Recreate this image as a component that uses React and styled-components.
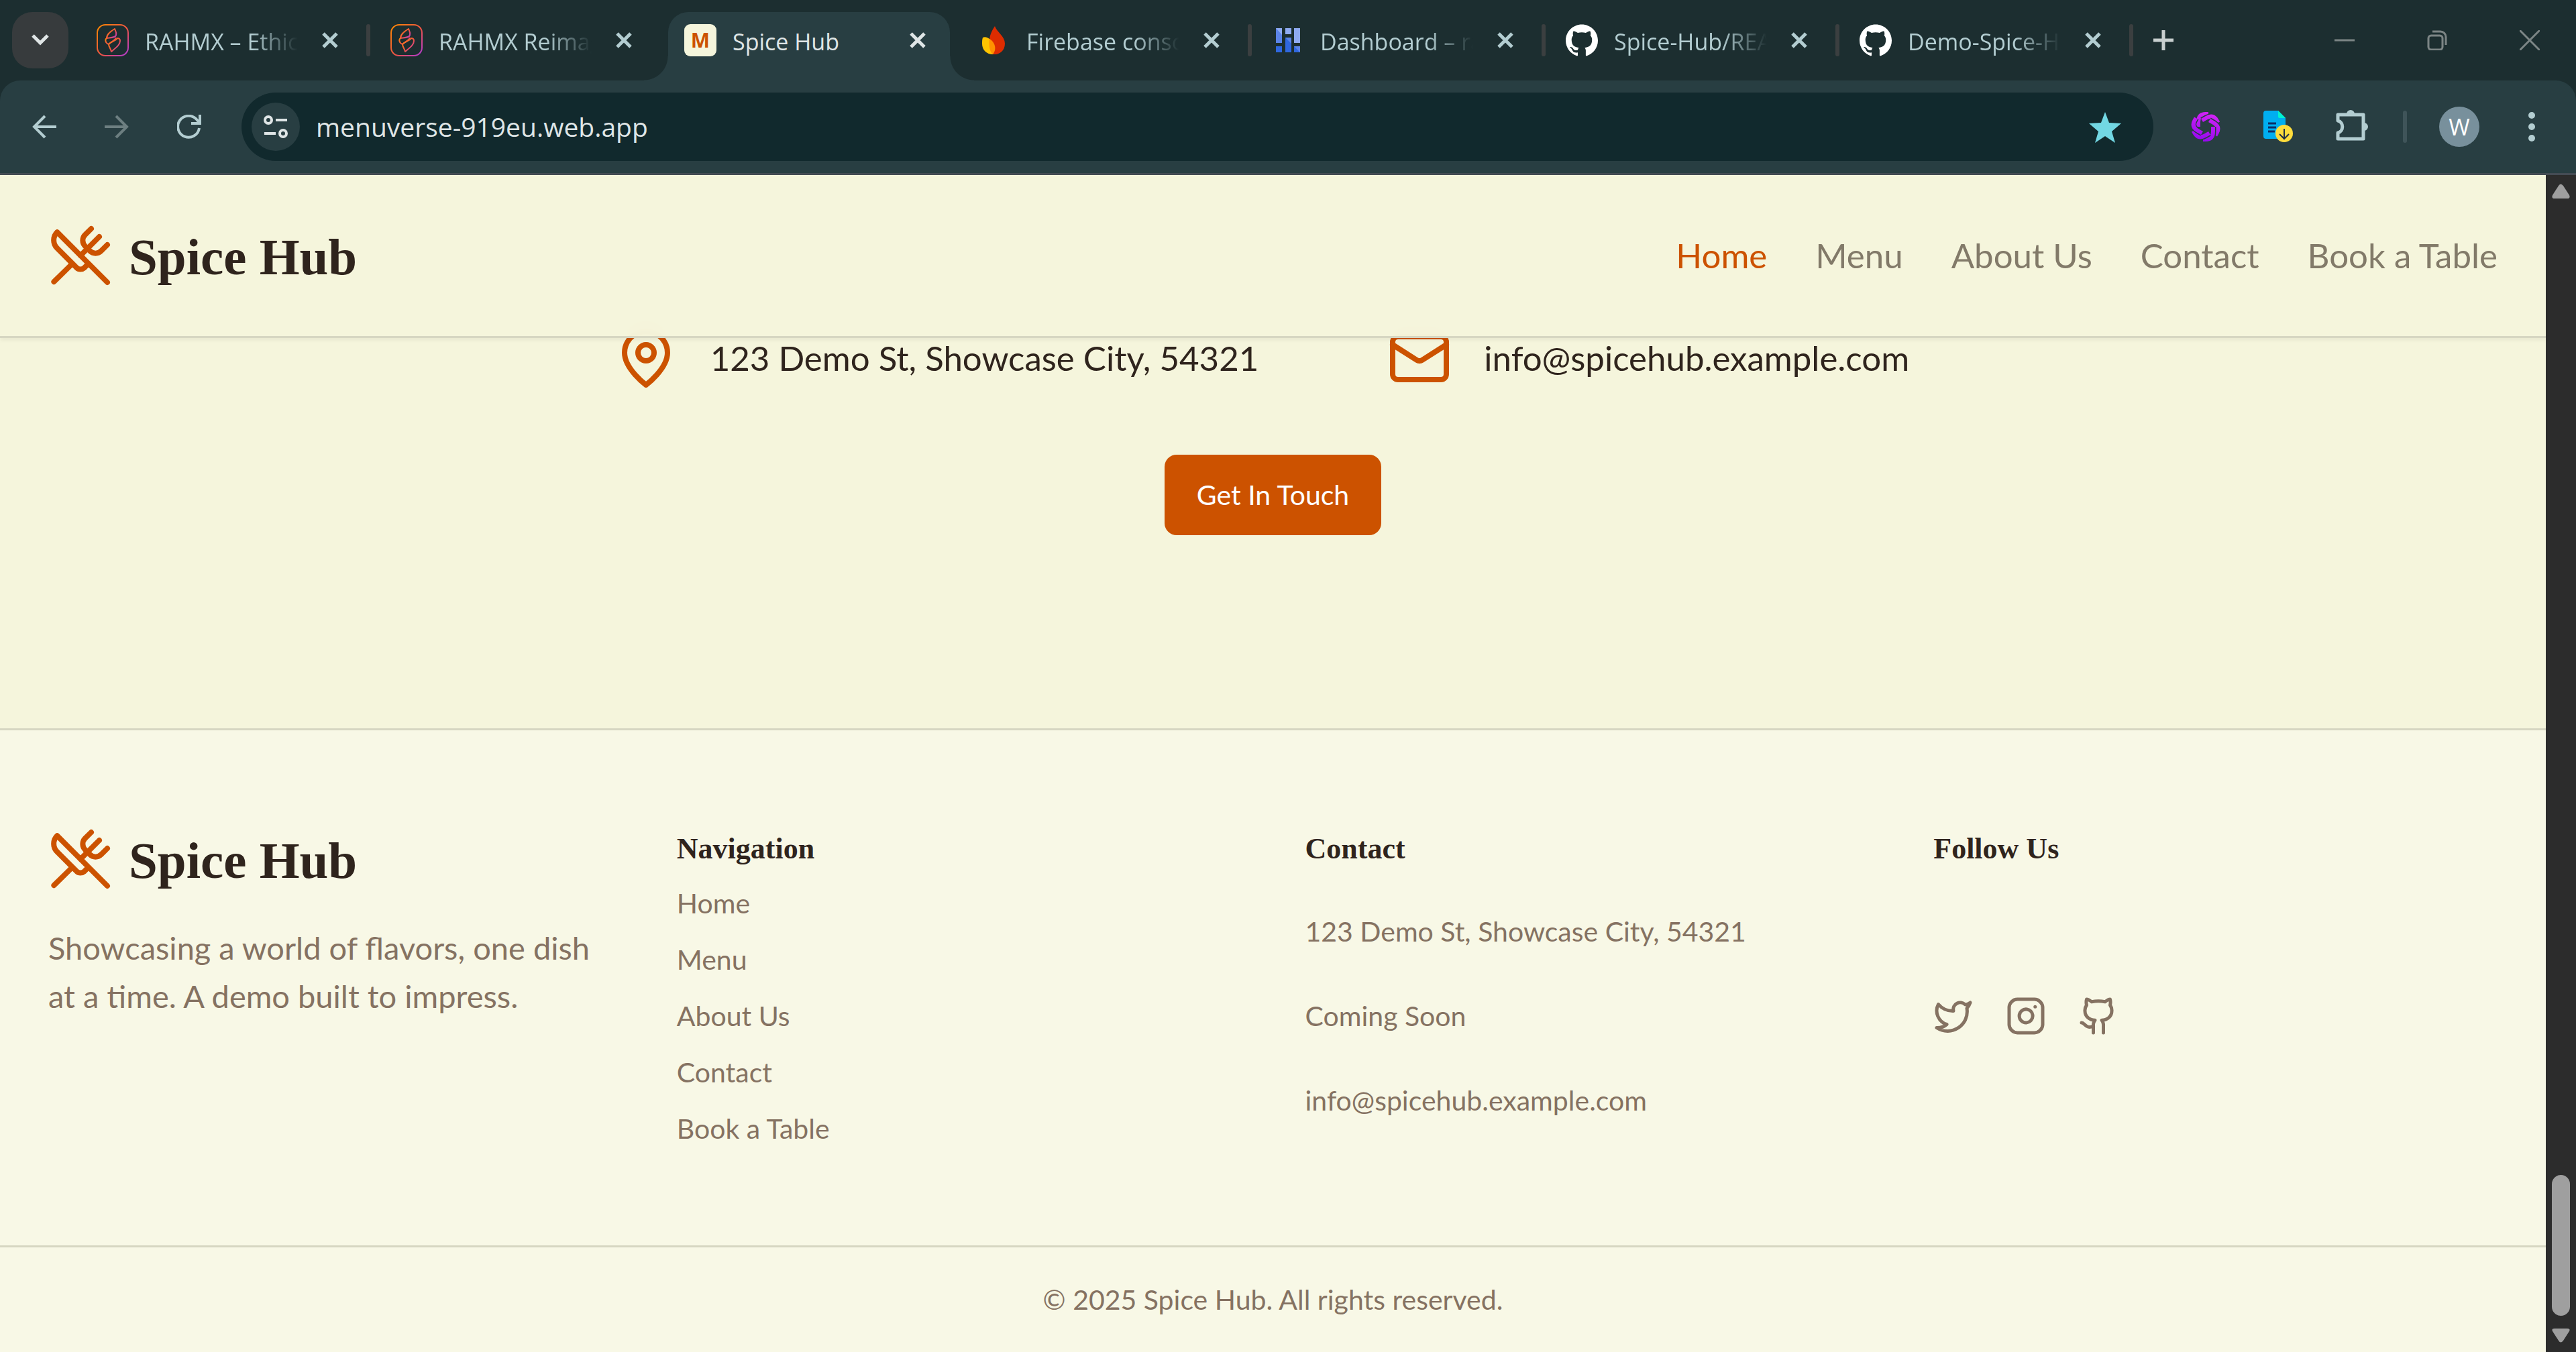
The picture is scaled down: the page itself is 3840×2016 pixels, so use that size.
import React from "react";
import styled, { createGlobalStyle } from "styled-components";
import { UtensilsCrossed, Twitter, Instagram, Github } from "lucide-react";
import { SiGithub } from "react-icons/si";

const body = `Lato, "Open Sans", sans-serif`;
const display = `"Liberation Serif", "Times New Roman", serif`;
const chrome = `"Open Sans", "Noto Sans", sans-serif`;

const color = {
  strip: "#1c2e30",
  toolbar: "#283e42",
  field: "#11292d",
  chromeText: "#b3cdd1",
  chromeBright: "#dfe5e6",
  divider: "#3b3f40",
  cream: "#f5f5dc",
  footer: "#f8f8e6",
  line: "#d6d6c2",
  orange: "#cc5200",
  ink: "#2f241d",
  muted: "#857262",
  navMuted: "#827a69",
};

const GlobalStyle = createGlobalStyle`
  * { box-sizing: border-box; }
  body { margin: 0; background: ${color.cream}; }
  button { border: 0; padding: 0; background: none; font: inherit; color: inherit; cursor: pointer; }
  a { color: inherit; text-decoration: none; }
  h4, p, ul { margin: 0; padding: 0; }
  ul { list-style: none; }
  svg { display: block; flex: none; }
`;

const Window = styled.div`
  display: flex;
  flex-direction: column;
  min-height: 100vh;
  background: ${color.strip};
`;

/* ---------- tab strip ---------- */

const TabStrip = styled.div`
  display: flex;
  align-items: flex-start;
  height: 120px;
  padding-left: 18px;
  font-family: ${chrome};
  color: ${color.chromeText};
`;

const TabSearch = styled.button`
  display: grid;
  place-items: center;
  width: 84px;
  height: 84px;
  margin: 18px 18px 0 0;
  border-radius: 30px;
  background: #373b3d;
  color: ${color.chromeBright};
`;

const TabList = styled.div`
  display: flex;
`;

const TabSlot = styled.div`
  display: flex;
  width: 438px;
  height: 120px;
  padding-top: 18px;
`;

const Tab = styled.div`
  position: relative;
  display: flex;
  align-items: center;
  gap: 24px;
  width: 420px;
  height: 102px;
  padding: 0 24px 18px;
  border-radius: 30px 30px 0 0;
  background: ${(p) => (p.$active ? color.toolbar : "transparent")};
  color: ${(p) => (p.$active ? color.chromeBright : color.chromeText)};

  &::before,
  &::after {
    content: "";
    display: ${(p) => (p.$active ? "block" : "none")};
    position: absolute;
    bottom: 0;
    width: 36px;
    height: 36px;
  }
  &::before {
    right: 100%;
    background: radial-gradient(circle at 0 0, transparent 35px, ${color.toolbar} 36px);
  }
  &::after {
    left: 100%;
    background: radial-gradient(circle at 100% 0, transparent 35px, ${color.toolbar} 36px);
  }
`;

const TabTitle = styled.span`
  flex: 1;
  min-width: 0;
  padding-top: 4px;
  overflow: hidden;
  white-space: nowrap;
  font-size: 34px;
  line-height: 48px;
  mask-image: ${(p) => (p.$active ? "none" : "linear-gradient(to right, #000 70%, transparent)")};
`;

const TabClose = styled.button`
  display: grid;
  place-items: center;
  width: 48px;
  height: 48px;
`;

const TabDivider = styled.i`
  width: 6px;
  height: 48px;
  margin: 18px 6px;
  border-radius: 3px;
  background: ${(p) => (p.$hidden ? "transparent" : color.divider)};
`;

const NewTab = styled.button`
  display: grid;
  place-items: center;
  width: 78px;
  height: 120px;
  color: #c8cfcf;
`;

const WindowControls = styled.div`
  display: flex;
  margin-left: auto;
  color: #7c8585;
`;

const WindowButton = styled.button`
  display: grid;
  place-items: center;
  width: 138px;
  height: 120px;
`;

const SiteBadge = styled.span`
  display: grid;
  place-items: center;
  flex: none;
  width: 48px;
  height: 48px;
  border-radius: 9px;
  background: ${color.cream};
  color: ${color.orange};
  font: 700 30px/48px ${chrome};
`;

/* ---------- toolbar ---------- */

const Toolbar = styled.div`
  display: flex;
  align-items: center;
  gap: 24px;
  height: 141px;
  padding: 0 24px;
  border-bottom: 3px solid #444c54;
  border-radius: 30px 30px 0 0;
  background: ${color.toolbar};
  color: ${color.chromeText};
  font-family: ${chrome};
`;

const ToolButton = styled.button`
  display: grid;
  place-items: center;
  flex: none;
  width: 84px;
  height: 84px;
  color: ${(p) => (p.$dim ? "#6d7f81" : color.chromeText)};
`;

const AddressBar = styled.div`
  display: flex;
  align-items: center;
  gap: 24px;
  flex: 1;
  height: 102px;
  margin: 0 12px;
  padding: 0 48px 0 15px;
  border-radius: 51px;
  background: ${color.field};
`;

const SiteInfo = styled.button`
  display: grid;
  place-items: center;
  width: 72px;
  height: 72px;
  border-radius: 50%;
  background: ${color.toolbar};
  color: ${color.chromeBright};
`;

const Address = styled.input`
  flex: 1;
  min-width: 0;
  padding: 0;
  border: 0;
  outline: 0;
  background: none;
  color: ${color.chromeBright};
  font: 400 39px/60px ${chrome};
`;

const Bookmark = styled.button`
  color: #72d7e3;
`;

const ToolDivider = styled.i`
  width: 6px;
  height: 48px;
  margin: 0 12px;
  border-radius: 3px;
  background: #3f5459;
`;

const Avatar = styled.span`
  display: grid;
  place-items: center;
  width: 60px;
  height: 60px;
  border-radius: 50%;
  background: #78909c;
  color: #fff;
  font-size: 34px;
  line-height: 60px;
`;

/* ---------- page ---------- */

const Viewport = styled.div`
  display: flex;
  flex: 1;
`;

const Page = styled.div`
  position: relative;
  display: flex;
  flex-direction: column;
  flex: 1;
  min-width: 0;
  background: ${color.cream};
  color: ${color.ink};
  font-family: ${body};
`;

const Header = styled.header`
  position: absolute;
  inset: 0 0 auto;
  z-index: 1;
  display: flex;
  align-items: center;
  justify-content: space-between;
  height: 243px;
  padding: 0 72px;
  border-bottom: 3px solid ${color.line};
  background: rgba(245, 245, 220, 0.97);
  box-shadow: 0 3px 6px rgba(0, 0, 0, 0.06);
  backdrop-filter: blur(12px);
`;

const Brand = styled.a`
  display: flex;
  align-items: center;
  gap: 24px;
  height: 96px;
  color: ${color.ink};

  svg { color: ${color.orange}; }
`;

const BrandName = styled.span`
  padding-top: 4px;
  font: 700 77px/96px ${display};
`;

const Nav = styled.nav`
  display: flex;
  gap: 72px;
  font-size: 51px;
  line-height: 84px;
`;

const NavLink = styled.a`
  color: ${(p) => (p.$active ? color.orange : color.navMuted)};
`;

const ContactSection = styled.section`
  display: flex;
  flex-direction: column;
  align-items: center;
  gap: 96px;
  padding: 225px 72px 288px;
`;

const ContactRow = styled.div`
  display: flex;
  justify-content: center;
  gap: 192px;
`;

const ContactItem = styled.div`
  display: flex;
  align-items: center;
  gap: 48px;
  min-width: 812px;
  font-size: 51px;
  line-height: 84px;

  svg { color: ${color.orange}; }
`;

const CallToAction = styled.button`
  height: 120px;
  padding: 0 48px;
  border-radius: 18px;
  background: ${color.orange};
  color: #fff;
  font-size: 41px;
  line-height: 60px;
`;

const Footer = styled.footer`
  flex: 1;
  border-top: 3px solid ${color.line};
  background: ${color.footer};
  color: ${color.muted};
  font-size: 41px;
  line-height: 60px;
`;

const FooterGrid = styled.div`
  display: grid;
  grid-template-columns: repeat(4, 1fr);
  gap: 96px;
  padding: 144px 72px;
`;

const About = styled.div`
  display: flex;
  flex-direction: column;
  gap: 48px;
`;

const Tagline = styled.p`
  font-size: 47px;
  line-height: 72px;
`;

const Column = styled.div`
  display: grid;
  grid-auto-rows: 1fr;
  gap: 24px;
`;

const LinkColumn = styled.div`
  display: flex;
  flex-direction: column;
  gap: 24px;
`;

const ColumnTitle = styled.h4`
  height: 60px;
  padding-top: 3px;
  font: 700 44px/60px ${display};
  color: ${color.ink};
`;

const Social = styled.div`
  display: flex;
  gap: 48px;
`;

const Copyright = styled.p`
  padding: 48px 72px;
  border-top: 3px solid ${color.line};
  text-align: center;
`;

const Scrollbar = styled.div`
  display: flex;
  flex-direction: column;
  align-items: center;
  width: 45px;
  padding: 12px 0;
  background: #2c2c2c;
`;

const ScrollTrack = styled.div`
  display: flex;
  flex: 1;
  align-items: flex-end;
  padding-bottom: 18px;
`;

const ScrollThumb = styled.div`
  width: 27px;
  height: 210px;
  border-radius: 14px;
  background: #9f9f9f;
`;

/* ---------- drawings ---------- */

const Glyph = ({ size, w = size, h = size, stroke = 4, children }) => (
  <svg
    width={w}
    height={h}
    viewBox={`0 0 ${w} ${h}`}
    fill="none"
    stroke="currentColor"
    strokeWidth={stroke}
    aria-hidden="true"
  >
    {children}
  </svg>
);

const CrossIcon = () => (
  <Glyph size={24} stroke={5}><path d="M2 2l20 20M22 2L2 22" /></Glyph>
);

const RahmxIcon = ({ id }) => (
  <Glyph size={48} stroke={2}>
    <defs>
      <linearGradient id={id} x1="0" y1="0" x2="1" y2="1">
        <stop offset="0" stopColor="#ff8a00" />
        <stop offset="0.55" stopColor="#ef5346" />
        <stop offset="1" stopColor="#b03ad8" />
      </linearGradient>
    </defs>
    <g stroke={`url(#${id})`} strokeLinejoin="round">
      <rect x="1" y="1" width="46" height="46" rx="12" />
      <path d="M27 7c-6 4-12 8-12 14 6-1 14-1 14-5 1-4-1-6-2-9Z" />
      <path d="M15 21c-3 2-2 7 3 9 4-4 10-6 11-10" />
      <path d="M18 30c0 4 3 6 4 11 7-6 13-10 13-16 0-3-2-4-4-4-3 5-9 4-13 9Z" />
    </g>
  </Glyph>
);

const FirebaseIcon = () => (
  <Glyph size={48} stroke={0}>
    <path fill="#dd2c00" d="M25 3c-5 7-8 15-8 22-1 7 1 15 5 20 8 1 18-4 18-16C40 18 28 12 25 3Z" />
    <path fill="#ffc400" d="M7 20c5-2 9 1 12 4 5 5 6 14 3 21C13 45 6 39 6 29c0-3 0-6 1-9Z" />
    <path fill="#ff9100" d="M17 22c7 4 12 14 5 23-5-4-6-13-5-23Z" />
  </Glyph>
);

const DashboardIcon = () => (
  <Glyph size={48} stroke={0}>
    <path fill="#5b84e8" d="M6 6h9v22H6z" />
    <path fill="#8fabf2" d="M6 6h9v10zM20 6h9v9h-9zM33 6h9v22h-9z" />
    <path fill="#2f67de" d="M6 33h9v9H6zM20 20h9v22h-9zM33 33h9v9h-9z" />
    <path fill="#5b84e8" d="M20 20h9v9zM33 33h9v9z" />
  </Glyph>
);

const blade = "M13 24V17Q13 5 24 5H28";

const ExtensionSwirl = () => (
  <Glyph size={48} stroke={6}>
    <defs>
      <linearGradient id="swirl" gradientUnits="userSpaceOnUse" x1="30" y1="0" x2="18" y2="48">
        <stop offset="0" stopColor="#d726f7" />
        <stop offset="1" stopColor="#9206ee" />
      </linearGradient>
      <mask id="blades" maskUnits="userSpaceOnUse" x="0" y="0" width="48" height="48">
        {[0, 60, 120, 180, 240, 300].map((turn) => (
          <g key={turn} transform={`rotate(${turn} 24 24)`}>
            <path d={blade} stroke="#000" strokeWidth="9" />
            <path d={blade} stroke="#fff" strokeWidth="6" />
          </g>
        ))}
      </mask>
    </defs>
    <rect width="48" height="48" fill="url(#swirl)" stroke="none" mask="url(#blades)" />
  </Glyph>
);

const DocumentIcon = () => (
  <Glyph w={46} h={48} stroke={0}>
    <path fill="#00aef0" d="M5 0h18l11 11v31H5a4 4 0 0 1-4-4V4a4 4 0 0 1 4-4Z" />
    <path fill="#00f2cf" d="M23 0l11 11H25a2 2 0 0 1-2-2Z" />
    <path stroke="#0b2f66" strokeWidth="3" d="M8 19h12M8 25h12M8 31h10" />
    <circle cx="32" cy="34" r="13" fill="#ffdd3c" />
    <path fill="none" stroke="#222f45" strokeWidth="2" d="M32 27v14M25 35l7 7 7-7" />
  </Glyph>
);

const PinIcon = () => (
  <svg width="96" height="96" viewBox="0 0 24 24" fill="none" stroke="currentColor" strokeWidth="2" strokeLinecap="round" strokeLinejoin="round" aria-hidden="true">
    <path d="M20 10c0 6-8 12-8 12s-8-6-8-12a8 8 0 0 1 16 0Z" />
    <circle cx="12" cy="10" r="3" />
  </svg>
);

const MailIcon = () => (
  <svg width="96" height="96" viewBox="0 0 24 24" fill="none" stroke="currentColor" strokeWidth="2" strokeLinecap="round" strokeLinejoin="round" aria-hidden="true">
    <rect width="20" height="16" x="2" y="4" rx="2" />
    <path d="m22 7-8.970 5.700a1.940 1.940 0 0 1-2.060 0L2 7" />
  </svg>
);

/* ---------- data ---------- */

const tabs = [
  { title: "RAHMX – Ethical", icon: <RahmxIcon id="rahmx-a" /> },
  { title: "RAHMX Reimagined", icon: <RahmxIcon id="rahmx-b" />, noDivider: true },
  { title: "Spice Hub", icon: <SiteBadge>M</SiteBadge>, active: true, noDivider: true },
  { title: "Firebase console", icon: <FirebaseIcon /> },
  { title: "Dashboard – rahmx", icon: <DashboardIcon /> },
  { title: "Spice-Hub/README", icon: <SiGithub size={48} color="#fff" /> },
  { title: "Demo-Spice-Hub", icon: <SiGithub size={48} color="#fff" /> },
];

const links = ["Home", "Menu", "About Us", "Contact", "Book a Table"];

const Logo = () => (
  <Brand href="#home">
    <UtensilsCrossed size={96} />
    <BrandName>Spice Hub</BrandName>
  </Brand>
);

export default function App() {
  return (
    <Window>
      <GlobalStyle />
      <TabStrip>
        <TabSearch aria-label="Search tabs">
          <Glyph w={28} h={18} stroke={5}><path d="M3 2l11 11L25 2" /></Glyph>
        </TabSearch>
        <TabList>
          {tabs.map((tab) => (
            <TabSlot key={tab.title}>
              <Tab $active={tab.active}>
                {tab.icon}
                <TabTitle $active={tab.active}>{tab.title}</TabTitle>
                <TabClose aria-label="Close tab"><CrossIcon /></TabClose>
              </Tab>
              <TabDivider $hidden={tab.noDivider} />
            </TabSlot>
          ))}
        </TabList>
        <NewTab aria-label="New tab">
          <Glyph size={30} stroke={5}><path d="M15 0v30M0 15h30" /></Glyph>
        </NewTab>
        <WindowControls>
          <WindowButton aria-label="Minimize">
            <Glyph size={30} stroke={3}><path d="M0 15h30" /></Glyph>
          </WindowButton>
          <WindowButton aria-label="Restore">
            <Glyph size={30} stroke={3}>
              <rect x="2" y="8" width="21" height="21" rx="4" />
              <path d="M8 2h12a8 8 0 0 1 8 8v12" />
            </Glyph>
          </WindowButton>
          <WindowButton aria-label="Close">
            <Glyph size={30} stroke={3}><path d="M0 0l30 30M30 0L0 30" /></Glyph>
          </WindowButton>
        </WindowControls>
      </TabStrip>

      <Toolbar>
        <ToolButton aria-label="Back">
          <Glyph size={36}><path d="M36 18H4M19 2L3 18l16 16" /></Glyph>
        </ToolButton>
        <ToolButton aria-label="Forward" $dim>
          <Glyph size={36}><path d="M0 18h32M17 2l16 16-16 16" /></Glyph>
        </ToolButton>
        <ToolButton aria-label="Reload">
          <Glyph size={36}><path d="M33 20a16 16 0 1 1-4-13l5 6M34 0v13H21" /></Glyph>
        </ToolButton>
        <AddressBar>
          <SiteInfo aria-label="View site information">
            <Glyph w={40} h={36}>
              <circle cx="9" cy="8" r="5" />
              <path d="M20 8h17M3 28h17" />
              <circle cx="31" cy="28" r="5" />
            </Glyph>
          </SiteInfo>
          <Address aria-label="Address" defaultValue="menuverse-919eu.web.app" />
          <Bookmark aria-label="Bookmark this tab">
            <svg width="48" height="48" viewBox="0 0 48 48" fill="currentColor" aria-hidden="true">
              <path d="M24 2l6 16 18 1-14 12 5 17-15-10L9 48l5-17L0 19l18-1Z" />
            </svg>
          </Bookmark>
        </AddressBar>
        <ToolButton aria-label="Assistant extension"><ExtensionSwirl /></ToolButton>
        <ToolButton aria-label="Download extension"><DocumentIcon /></ToolButton>
        <ToolButton aria-label="Extensions">
          <Glyph size={54} stroke={5}>
            <path strokeLinejoin="round" d="M8 9h38v36H8V36c9-2 9-16 0-18Z" />
            <path fill="currentColor" stroke="none" d="M21 8a6 6 0 0 1 12 0ZM47 21a6 6 0 0 1 0 12Z" />
          </Glyph>
        </ToolButton>
        <ToolDivider />
        <ToolButton aria-label="Profile"><Avatar>W</Avatar></ToolButton>
        <ToolButton aria-label="Menu">
          <Glyph w={10} h={44} stroke={0}>
            <g fill="currentColor">
              <circle cx="5" cy="5" r="5" />
              <circle cx="5" cy="22" r="5" />
              <circle cx="5" cy="39" r="5" />
            </g>
          </Glyph>
        </ToolButton>
      </Toolbar>

      <Viewport>
        <Page>
          <Header>
            <Logo />
            <Nav>
              {links.map((link, i) => (
                <NavLink key={link} href="#" $active={i === 0}>{link}</NavLink>
              ))}
            </Nav>
          </Header>

          <ContactSection>
            <ContactRow>
              <ContactItem><PinIcon />123 Demo St, Showcase City, 54321</ContactItem>
              <ContactItem><MailIcon />info@spicehub.example.com</ContactItem>
            </ContactRow>
            <CallToAction>Get In Touch</CallToAction>
          </ContactSection>

          <Footer>
            <FooterGrid>
              <About>
                <Logo />
                <Tagline>Showcasing a world of flavors, one dish at a time. A demo built to impress.</Tagline>
              </About>
              <LinkColumn>
                <ColumnTitle>Navigation</ColumnTitle>
                {links.map((link) => <a key={link} href="#">{link}</a>)}
              </LinkColumn>
              <Column>
                <ColumnTitle>Contact</ColumnTitle>
                <p>123 Demo St, Showcase City, 54321</p>
                <p>Coming Soon</p>
                <p>info@spicehub.example.com</p>
              </Column>
              <Column>
                <ColumnTitle>Follow Us</ColumnTitle>
                <Social>
                  <a href="#" aria-label="Twitter"><Twitter size={60} /></a>
                  <a href="#" aria-label="Instagram"><Instagram size={60} /></a>
                  <a href="#" aria-label="GitHub"><Github size={60} /></a>
                </Social>
              </Column>
            </FooterGrid>
            <Copyright>© 2025 Spice Hub. All rights reserved.</Copyright>
          </Footer>
        </Page>
        <Scrollbar>
          <Glyph w={27} h={24} stroke={0}>
            <path fill="#9f9f9f" d="M10 4q3-5 7 0l9 14q2 5-3 5H4q-5 0-3-5Z" />
          </Glyph>
          <ScrollTrack><ScrollThumb /></ScrollTrack>
          <Glyph w={27} h={24} stroke={0}>
            <path fill="#9f9f9f" d="M10 19q3 5 7 0l9-14q2-4-3-4H4Q-1 1 1 5Z" />
          </Glyph>
        </Scrollbar>
      </Viewport>
    </Window>
  );
}
